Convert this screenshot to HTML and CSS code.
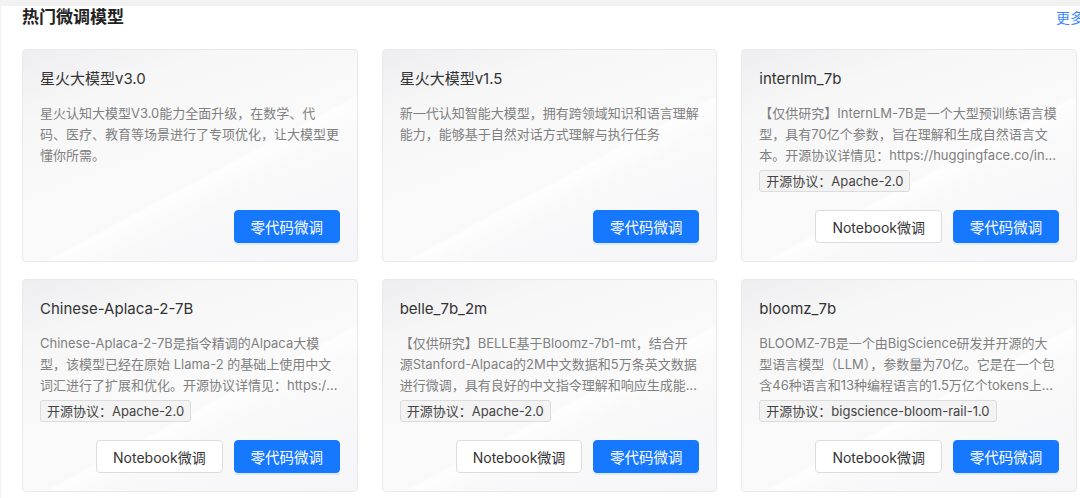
FILE: index.html
```html
<!DOCTYPE html>
<html lang="zh-CN">
<head>
  <meta charset="UTF-8">
  <meta name="viewport" content="width=device-width, initial-scale=1.0">
  <title>热门微调模型</title>
  <link rel="stylesheet" href="styles.css">
</head>
<body>
  <div class="panel">
    <div class="panel-head">
      <h2>热门微调模型</h2>
      <a class="more" href="#">更多</a>
    </div>

    <div class="model-grid">
      <div class="model-card">
        <h3>星火大模型v3.0</h3>
        <p class="desc">星火认知大模型V3.0能力全面升级，在数学、代码、医疗、教育等场景进行了专项优化，让大模型更懂你所需。</p>
        <div class="actions">
          <button class="btn btn-primary">零代码微调</button>
        </div>
      </div>

      <div class="model-card">
        <h3>星火大模型v1.5</h3>
        <p class="desc">新一代认知智能大模型，拥有跨领域知识和语言理解能力，能够基于自然对话方式理解与执行任务</p>
        <div class="actions">
          <button class="btn btn-primary">零代码微调</button>
        </div>
      </div>

      <div class="model-card">
        <h3>internlm_7b</h3>
        <p class="desc">【仅供研究】InternLM-7B是一个大型预训练语言模型，具有70亿个参数，旨在理解和生成自然语言文本。开源协议详情见：https://huggingface.co/internlm/internlm-7b</p>
        <span class="tag">开源协议：Apache-2.0</span>
        <div class="actions">
          <button class="btn">Notebook微调</button>
          <button class="btn btn-primary">零代码微调</button>
        </div>
      </div>

      <div class="model-card">
        <h3>Chinese-Aplaca-2-7B</h3>
        <p class="desc">Chinese-Aplaca-2-7B是指令精调的Alpaca大模型，该模型已经在原始 Llama-2 的基础上使用中文词汇进行了扩展和优化。开源协议详情见：https://github.com/ymcui/Chinese-LLaMA-Alpaca-2</p>
        <span class="tag">开源协议：Apache-2.0</span>
        <div class="actions">
          <button class="btn">Notebook微调</button>
          <button class="btn btn-primary">零代码微调</button>
        </div>
      </div>

      <div class="model-card">
        <h3>belle_7b_2m</h3>
        <p class="desc">【仅供研究】BELLE基于Bloomz-7b1-mt，结合开源Stanford-Alpaca的2M中文数据和5万条英文数据进行微调，具有良好的中文指令理解和响应生成能力。</p>
        <span class="tag">开源协议：Apache-2.0</span>
        <div class="actions">
          <button class="btn">Notebook微调</button>
          <button class="btn btn-primary">零代码微调</button>
        </div>
      </div>

      <div class="model-card">
        <h3>bloomz_7b</h3>
        <p class="desc">BLOOMZ-7B是一个由BigScience研发并开源的大型语言模型（LLM），参数量为70亿。它是在一个包含46种语言和13种编程语言的1.5万亿个tokens上训练的。</p>
        <span class="tag">开源协议：bigscience-bloom-rail-1.0</span>
        <div class="actions">
          <button class="btn">Notebook微调</button>
          <button class="btn btn-primary">零代码微调</button>
        </div>
      </div>
    </div>
  </div>
</body>
</html>
```

FILE: styles.css
```css
body {
  margin: 0;
  padding: 6px 0 0 0;
  background-color: #f2f2f3;
  font-family: Inter, "Noto Sans CJK SC", sans-serif;
  overflow: hidden;
}
.panel {
  background-color: white;
  margin-left: 1px;
  padding: 0 3px 10px 21px;
  min-height: 492px;
}
.panel-head {
  display: flex;
  justify-content: space-between;
  align-items: center;
  height: 22px;
  margin-right: -7px;
}
.panel-head h2 {
  margin: 0;
  font-size: 17px;
  font-weight: bold;
  color: #222;
  line-height: 22px;
}
.more {
  color: #3b86ff;
  font-size: 14px;
  text-decoration: none;
}
.model-grid {
  display: grid;
  grid-template-columns: repeat(3, 1fr);
  column-gap: 24px;
  row-gap: 17px;
  margin-top: 21px;
}
.model-card {
  height: 213px;
  box-sizing: border-box;
  padding: 18px 17px 18px 17px;
  border: 1px solid #e9e9ec;
  border-radius: 4px;
  background:
    linear-gradient(152deg, transparent 57%, rgba(255, 255, 255, 0.75) 58%, rgba(255, 255, 255, 0) 66%),
    linear-gradient(160deg, #eeeef0 0%, #f7f7f8 22%, #fafafb 55%, #f6f6f8 100%);
  display: flex;
  flex-direction: column;
  align-items: flex-start;
}
.model-card h3 {
  margin: 0;
  font-size: 15px;
  font-weight: normal;
  color: #333;
  line-height: 22px;
}
.desc {
  margin: 13px 0 0 0;
  font-size: 13px;
  line-height: 21px;
  color: #808080;
  word-break: break-all;
  display: -webkit-box;
  -webkit-line-clamp: 3;
  -webkit-box-orient: vertical;
  overflow: hidden;
}
.tag {
  margin-top: 4px;
  padding: 0 6px;
  height: 22px;
  line-height: 20px;
  font-size: 13px;
  color: #444;
  background-color: #f3f3f3;
  border: 1px solid #dcdcdc;
  border-radius: 3px;
  box-sizing: border-box;
}
.actions {
  margin-top: auto;
  align-self: stretch;
  display: flex;
  justify-content: flex-end;
  gap: 11px;
}
.btn {
  height: 33px;
  padding: 0 16px;
  font-family: inherit;
  font-size: 14px;
  white-space: nowrap;
  color: #333;
  background-color: white;
  border: 1px solid #dcdcdc;
  border-radius: 4px;
  cursor: pointer;
}
.btn-primary {
  width: 106px;
  padding: 0;
  font-size: 14.5px;
  color: white;
  background-color: #1677ff;
  border-color: #1677ff;
  box-shadow: 0 2px 0 rgba(5, 145, 255, 0.12);
}
.btn-primary:hover {
  background-color: #4096ff;
}
```
